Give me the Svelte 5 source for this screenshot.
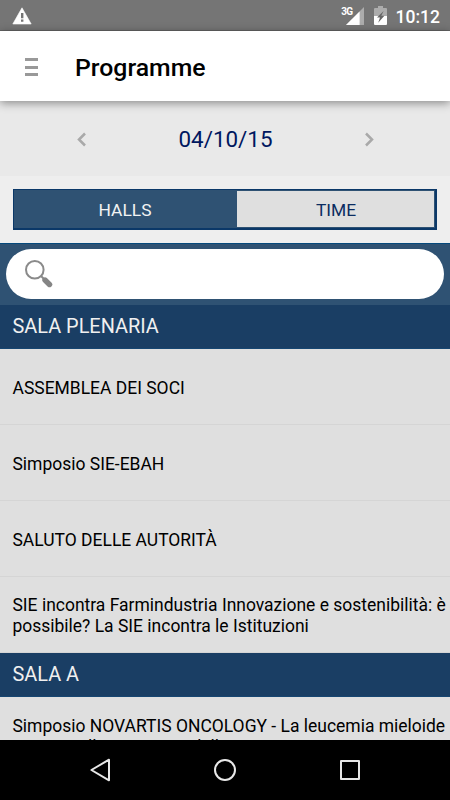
<script>
	const halls = [
		{
			name: 'SALA PLENARIA',
			events: [
				'ASSEMBLEA DEI SOCI',
				'Simposio SIE-EBAH',
				'SALUTO DELLE AUTORITÀ',
				'SIE incontra Farmindustria Innovazione e sostenibilità: è possibile? La SIE incontra le Istituzioni'
			]
		},
		{
			name: 'SALA A',
			events: [
				'Simposio NOVARTIS ONCOLOGY - La leucemia mieloide cronica: alla conquista della cura'
			]
		}
	];

	let tab = $state('halls');
</script>

<div class="screen">
	<div class="status">
		<svg class="warning" width="20" height="18" viewBox="0 0 20 18">
			<path d="M10 .8 19.2 17H.8z" fill="#fff" stroke="#fff" stroke-width=".6" stroke-linejoin="round"/>
			<path d="M9 6h2.4v5.2H9zM9 12.6h2.4v2.2H9z" fill="#757575"/>
		</svg>
		<div class="signal">
			<span>3G</span>
			<svg width="18" height="18" viewBox="0 0 18 18">
				<path d="M18 0v18H0z" fill="#acacac"/>
				<path d="M13.6 4.4V18H0z" fill="#fff"/>
			</svg>
		</div>
		<svg class="battery" width="13" height="19" viewBox="0 0 13 19">
			<path d="M4 0h5v2h3q1 0 1 1v7H0V3q0-1 1-1h3z" fill="#acacac"/>
			<path d="M0 10h13v8q0 1-1 1H1q-1 0-1-1z" fill="#fff"/>
			<path d="M9.6 5 3 11.6h3L4.2 16.8 10.4 9.8H7.3z" fill="#666"/>
		</svg>
		<time>10:12</time>
	</div>

	<header>
		<button class="menu" aria-label="Menu"><i></i><i></i><i></i></button>
		<h1>Programme</h1>
	</header>

	<div class="day">
		<button aria-label="Previous day">
			<svg width="10" height="15" viewBox="0 0 10 15"><path d="M8 1.5 2 7.5l6 6"/></svg>
		</button>
		<span>04/10/15</span>
		<button aria-label="Next day">
			<svg width="10" height="15" viewBox="0 0 10 15"><path d="m2 1.5 6 6-6 6"/></svg>
		</button>
	</div>

	<div class="tabs">
		<button class:active={tab === 'halls'} onclick={() => (tab = 'halls')}>HALLS</button>
		<button class:active={tab === 'time'} onclick={() => (tab = 'time')}>TIME</button>
	</div>

	<div class="search">
		<label>
			<svg width="28" height="28" viewBox="0 0 28 28">
				<circle cx="9.8" cy="9.8" r="8.8" fill="none" stroke="#8a8a8a" stroke-width="2"/>
				<path d="m16 16 3 3" stroke="#8a8a8a" stroke-width="2"/>
				<path d="m20 20 4.5 4.5" stroke="#858585" stroke-width="5.4" stroke-linecap="round"/>
			</svg>
			<input type="text" aria-label="Search">
		</label>
	</div>

	<main>
		{#each halls as hall}
			<h2>{hall.name}</h2>
			<ul>
				{#each hall.events as event}
					<li><span>{event}</span></li>
				{/each}
			</ul>
		{/each}
	</main>

	<nav>
		<button aria-label="Back">
			<svg width="24" height="26" viewBox="0 0 24 26"><path d="M21 2.7v20.6L3.4 13z"/></svg>
		</button>
		<button aria-label="Home">
			<svg width="24" height="26" viewBox="0 0 24 26"><circle cx="12" cy="13" r="10"/></svg>
		</button>
		<button aria-label="Recent apps">
			<svg width="24" height="26" viewBox="0 0 24 26"><path d="M3 4h18v18H3z"/></svg>
		</button>
	</nav>
</div>

<style>
	:global(body) {
		margin: 0;
	}

	.screen {
		display: flex;
		flex-direction: column;
		width: 450px;
		height: 800px;
		overflow: hidden;
		background: #eee;
		font-family: Roboto, sans-serif;
		color: #000;
	}

	button {
		padding: 0;
		border: 0;
		background: none;
		font: inherit;
	}

	svg {
		display: block;
	}

	.status {
		display: flex;
		align-items: center;
		box-sizing: border-box;
		height: 31px;
		flex: none;
		padding: 0 10px 0 12px;
		background: #757575;
		border-bottom: 1px solid #636363;
		color: #fff;
	}

	.warning {
		margin-right: auto;
		padding-top: 1px;
	}

	.signal {
		display: flex;
		align-items: flex-start;
		padding-top: 2px;
	}

	.signal span {
		margin-right: -7px;
		font: bold 10px/10px Roboto, sans-serif;
		letter-spacing: -0.6px;
		z-index: 1;
	}

	.battery {
		margin: 0 9px 0 10px;
		padding-top: 1px;
	}

	time {
		font-size: 17.5px;
		font-weight: 500;
		line-height: 30px;
		padding-top: 3px;
	}

	header {
		display: flex;
		align-items: center;
		flex: none;
		height: 70px;
		padding-left: 25px;
		background: #fff;
		box-shadow: 0 2px 9px rgba(0, 0, 0, 0.42);
		z-index: 1;
	}

	.menu {
		display: flex;
		flex-direction: column;
		gap: 4.5px;
		width: 13px;
		margin-right: 37px;
		padding-top: 2px;
	}

	.menu i {
		height: 3px;
		background: #999;
	}

	h1 {
		margin: 0;
		font-size: 24.8px;
		font-weight: 500;
		line-height: 30px;
		padding-top: 3px;
	}

	.day {
		display: flex;
		align-items: center;
		justify-content: space-between;
		box-sizing: border-box;
		flex: none;
		height: 75px;
		padding: 1px 76px 0 77px;
		background: #e9e9e9;
		color: #00175f;
		font-size: 22.4px;
	}

	.day path {
		fill: none;
		stroke: #a9a9a9;
		stroke-width: 2.5;
	}

	.tabs {
		display: grid;
		grid-template-columns: 223px 1fr;
		box-sizing: border-box;
		flex: none;
		height: 41px;
		margin: 13px 13px 13px;
		background: #dfdfdf;
		border: 2px solid #0b3868;
		border-width: 1px 2px 2px 1px;
		font-size: 17.4px;
	}

	.tabs button {
		border: 1px solid #2f5273;
		border-left: 0;
		color: #0b2c61;
		padding: 2px 0 0 1px;
	}

	.tabs .active {
		background: #2f5273;
		color: #f2f2f2;
		padding-left: 0;
	}

	.search {
		box-sizing: border-box;
		flex: none;
		height: 62px;
		padding: 5px 6px 6px;
		background: #2f5273;
		border-top: 1px solid #05497c;
	}

	label {
		display: flex;
		align-items: center;
		box-sizing: border-box;
		height: 50px;
		padding: 0 19px;
		border-radius: 25px;
		background: #fff;
	}

	input {
		flex: 1;
		margin-left: 8px;
		border: 0;
		outline: 0;
		background: none;
		font: 17.5px Roboto, sans-serif;
	}

	main {
		flex: 1;
		min-height: 0;
		overflow: hidden;
		background: #dfdfdf;
	}

	h2 {
		box-sizing: border-box;
		height: 44px;
		margin: 0;
		padding-left: 12.5px;
		background: #1a3e64;
		border-bottom: 1px solid #164672;
		color: #f0f0f0;
		font-size: 19.9px;
		font-weight: 400;
		line-height: 43px;
	}

	ul {
		margin: 0;
		padding: 0;
		list-style: none;
	}

	li {
		display: flex;
		align-items: center;
		box-sizing: border-box;
		height: 76px;
		padding: 3.4px 0 0 12.5px;
		border-bottom: 1px solid #d5d5d5;
		font-size: 17.48px;
		line-height: 20.8px;
	}

	ul:last-child li {
		padding-top: 5.4px;
	}

	nav {
		display: flex;
		justify-content: center;
		align-items: center;
		gap: 101px;
		flex: none;
		height: 60px;
		background: #000;
	}

	nav path,
	nav circle {
		fill: none;
		stroke: #e8e8e8;
		stroke-width: 2;
		stroke-linejoin: round;
	}
</style>
